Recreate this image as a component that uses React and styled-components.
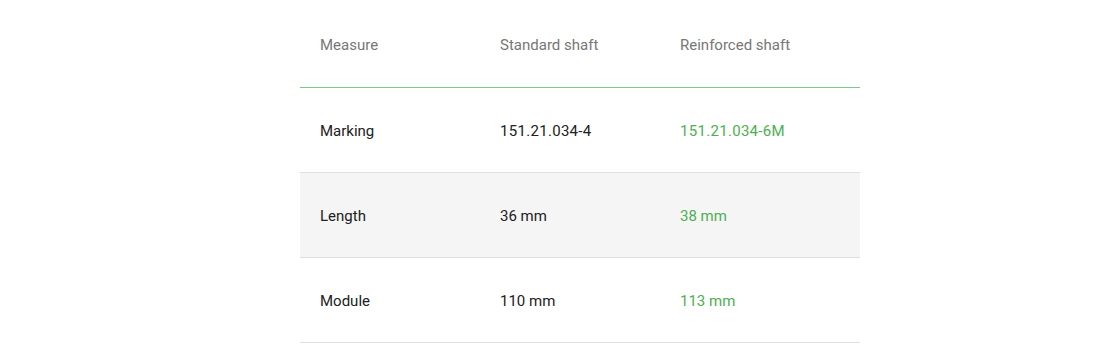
import React from "react";
import styled, { createGlobalStyle } from "styled-components";

const Global = createGlobalStyle`
  html, body { margin: 0; padding: 0; background: #fff; }
  body { font-family: Roboto, "Noto Sans", sans-serif; -webkit-font-smoothing: antialiased; }
`;

const Table = styled.div`
  width: 560px;
  margin-left: 300px;
  display: flex;
  flex-direction: column;
`;

const Row = styled.div`
  display: grid;
  grid-template-columns: 180px 180px 200px;
  box-sizing: border-box;
  height: ${(p) => (p.$head ? "88px" : "85px")};
  padding-top: ${(p) => (p.$head ? "3px" : "2px")};
  align-items: center;
  background: ${(p) => (p.$shade ? "#f5f5f5" : "#fff")};
  border-bottom: ${(p) => (p.$head ? "1px solid #81c784" : "1px solid #e0e0e0")};
`;

const Cell = styled.div`
  padding-left: 20px;
  font-size: 15px;
  letter-spacing: ${(p) => (p.$num ? "0.3px" : "0")};
  color: ${(p) => (p.$head ? "#777777" : p.$accent ? "#4caf50" : "#212121")};
  font-weight: 400;
`;

const rows = [
  ["Marking", "151.21.034-4", "151.21.034-6M"],
  ["Length", "36 mm", "38 mm"],
  ["Module", "110 mm", "113 mm"],
];

export default function App() {
  return (
    <>
      <Global />
      <Table>
        <Row $head>
          <Cell $head>Measure</Cell>
          <Cell $head>Standard shaft</Cell>
          <Cell $head>Reinforced shaft</Cell>
        </Row>
        {rows.map((r, i) => (
          <Row key={r[0]} $shade={i === 1}>
            <Cell>{r[0]}</Cell>
            <Cell $num={i === 0}>{r[1]}</Cell>
            <Cell $num={i === 0} $accent>{r[2]}</Cell>
          </Row>
        ))}
      </Table>
    </>
  );
}
